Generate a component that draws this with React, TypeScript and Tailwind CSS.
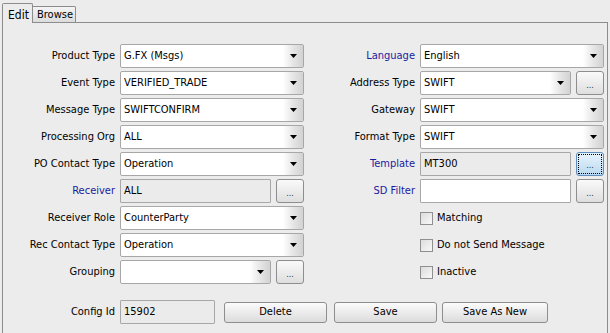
import React from "react";

const font = { fontFamily: '"DejaVu Sans Condensed", "DejaVu Sans", Tahoma, sans-serif' };

function Arrow() {
  return (
    <svg width="7" height="4" viewBox="0 0 7 4">
      <path d="M0 0 H7 L3.5 4 Z" fill="#000" />
    </svg>
  );
}

function Combo({ value, w }: { value: string; w: string }) {
  return (
    <div className={`${w} h-[24px] flex border border-[#a7a7a7] rounded-[2px] bg-white overflow-hidden`}>
      <div className="flex-1 flex items-center pl-[3px] text-[11px] text-black whitespace-nowrap">{value}</div>
      <div className="w-[20px] h-full flex items-center justify-center bg-gradient-to-r from-[#ffffff] via-[#e6e6e6] to-[#d2d2d2]">
        <Arrow />
      </div>
    </div>
  );
}

function Field({ value, w, disabled }: { value: string; w: string; disabled?: boolean }) {
  return (
    <div
      className={`${w} h-[24px] flex items-center pl-[3px] text-[11px] text-black border border-[#a7a7a7] rounded-[1px] ${
        disabled ? "bg-[#ebebeb]" : "bg-white"
      }`}
    >
      {value}
    </div>
  );
}

function Dots({ focused }: { focused?: boolean }) {
  return (
    <div
      className={`w-[28px] h-[24px] ml-[5px] rounded-[3px] border flex items-center justify-center ${
        focused
          ? "border-[#5f8fbf] bg-gradient-to-b from-[#e8f4fc] to-[#b9d9f0]"
          : "border-[#8e8e8e] bg-gradient-to-b from-[#fafafa] to-[#dedede]"
      }`}
    >
      <div
        className={`w-[24px] h-[20px] flex items-end justify-center pb-[3px] text-[9px] leading-none text-[#333] ${
          focused ? "border border-dotted border-[#000]" : ""
        }`}
      >
        ...
      </div>
    </div>
  );
}

function Label({ text, blue, w }: { text: string; blue?: boolean; w: string }) {
  return (
    <div className={`${w} pr-[5px] text-right text-[11px] whitespace-nowrap ${blue ? "text-[#1b1ba0]" : "text-black"}`}>
      {text}
    </div>
  );
}

function Row({ children }: { children: React.ReactNode }) {
  return <div className="h-[24px] flex items-center">{children}</div>;
}

function Check({ text }: { text: string }) {
  return (
    <Row>
      <div className="w-[116px]" />
      <div className="w-[13px] h-[13px] border border-[#8f8f8f] bg-gradient-to-br from-[#dcdcdc] to-[#f8f8f8]" />
      <div className="ml-[4px] text-[11px] text-black">{text}</div>
    </Row>
  );
}

function Btn({ text, w }: { text: string; w: string }) {
  return (
    <div
      className={`${w} h-[21px] rounded-[3px] border border-[#8e8e8e] bg-gradient-to-b from-[#fbfbfb] to-[#dcdcdc] flex items-center justify-center text-[11px] text-black`}
    >
      {text}
    </div>
  );
}

export default function App() {
  return (
    <div className="w-[610px] h-[333px] bg-[#ececec] overflow-hidden" style={font}>
      <div className="flex items-end h-[22px] pl-[2px]">
        <div className="h-[20px] w-[31px] border border-b-0 border-[#8c8c8c] rounded-t-[2px] bg-[#ececec] text-[12px] text-black pl-[5px] pt-[2px] relative z-10 -mb-px pb-px">
          Edit
        </div>
        <div className="h-[16px] w-[43px] border border-l-0 border-b-0 border-[#8c8c8c] rounded-tr-[2px] bg-gradient-to-b from-[#f4f4f4] to-[#dcdcdc] text-[11px] text-black pl-[4px] leading-[15px]">
          Browse
        </div>
      </div>
      <div className="ml-[2px] w-[606px] h-[320px] border border-[#8c8c8c] bg-[#ececec]">
        <div className="flex pt-[21px]">
          <div className="flex flex-col gap-[3px]">
            <Row><Label text="Product Type" w="w-[117px]" /><Combo value="G.FX (Msgs)" w="w-[184px]" /></Row>
            <Row><Label text="Event Type" w="w-[117px]" /><Combo value="VERIFIED_TRADE" w="w-[184px]" /></Row>
            <Row><Label text="Message Type" w="w-[117px]" /><Combo value="SWIFTCONFIRM" w="w-[184px]" /></Row>
            <Row><Label text="Processing Org" w="w-[117px]" /><Combo value="ALL" w="w-[184px]" /></Row>
            <Row><Label text="PO Contact Type" w="w-[117px]" /><Combo value="Operation" w="w-[184px]" /></Row>
            <Row><Label text="Receiver" blue w="w-[117px]" /><Field value="ALL" w="w-[151px]" disabled /><Dots /></Row>
            <Row><Label text="Receiver Role" w="w-[117px]" /><Combo value="CounterParty" w="w-[184px]" /></Row>
            <Row><Label text="Rec Contact Type" w="w-[117px]" /><Combo value="Operation" w="w-[184px]" /></Row>
            <Row><Label text="Grouping" w="w-[117px]" /><Combo value="" w="w-[151px]" /><Dots /></Row>
          </div>
          <div className="flex flex-col gap-[3px]">
            <Row><Label text="Language" blue w="w-[116px]" /><Combo value="English" w="w-[184px]" /></Row>
            <Row><Label text="Address Type" w="w-[116px]" /><Combo value="SWIFT" w="w-[151px]" /><Dots /></Row>
            <Row><Label text="Gateway" w="w-[116px]" /><Combo value="SWIFT" w="w-[184px]" /></Row>
            <Row><Label text="Format Type" w="w-[116px]" /><Combo value="SWIFT" w="w-[184px]" /></Row>
            <Row><Label text="Template" blue w="w-[116px]" /><Field value="MT300" w="w-[151px]" disabled /><Dots focused /></Row>
            <Row><Label text="SD Filter" blue w="w-[116px]" /><Field value="" w="w-[151px]" /><Dots /></Row>
            <Check text="Matching" />
            <Check text="Do not Send Message" />
            <Check text="Inactive" />
          </div>
        </div>
        <div className="flex items-center mt-[16px]">
          <Label text="Config Id" w="w-[117px]" />
          <Field value="15902" w="w-[95px]" disabled />
          <div className="ml-[9px] flex gap-[7px]">
            <Btn text="Delete" w="w-[103px]" />
            <Btn text="Save" w="w-[103px]" />
          </div>
          <div className="ml-[5px]">
            <Btn text="Save As New" w="w-[106px]" />
          </div>
        </div>
      </div>
    </div>
  );
}
